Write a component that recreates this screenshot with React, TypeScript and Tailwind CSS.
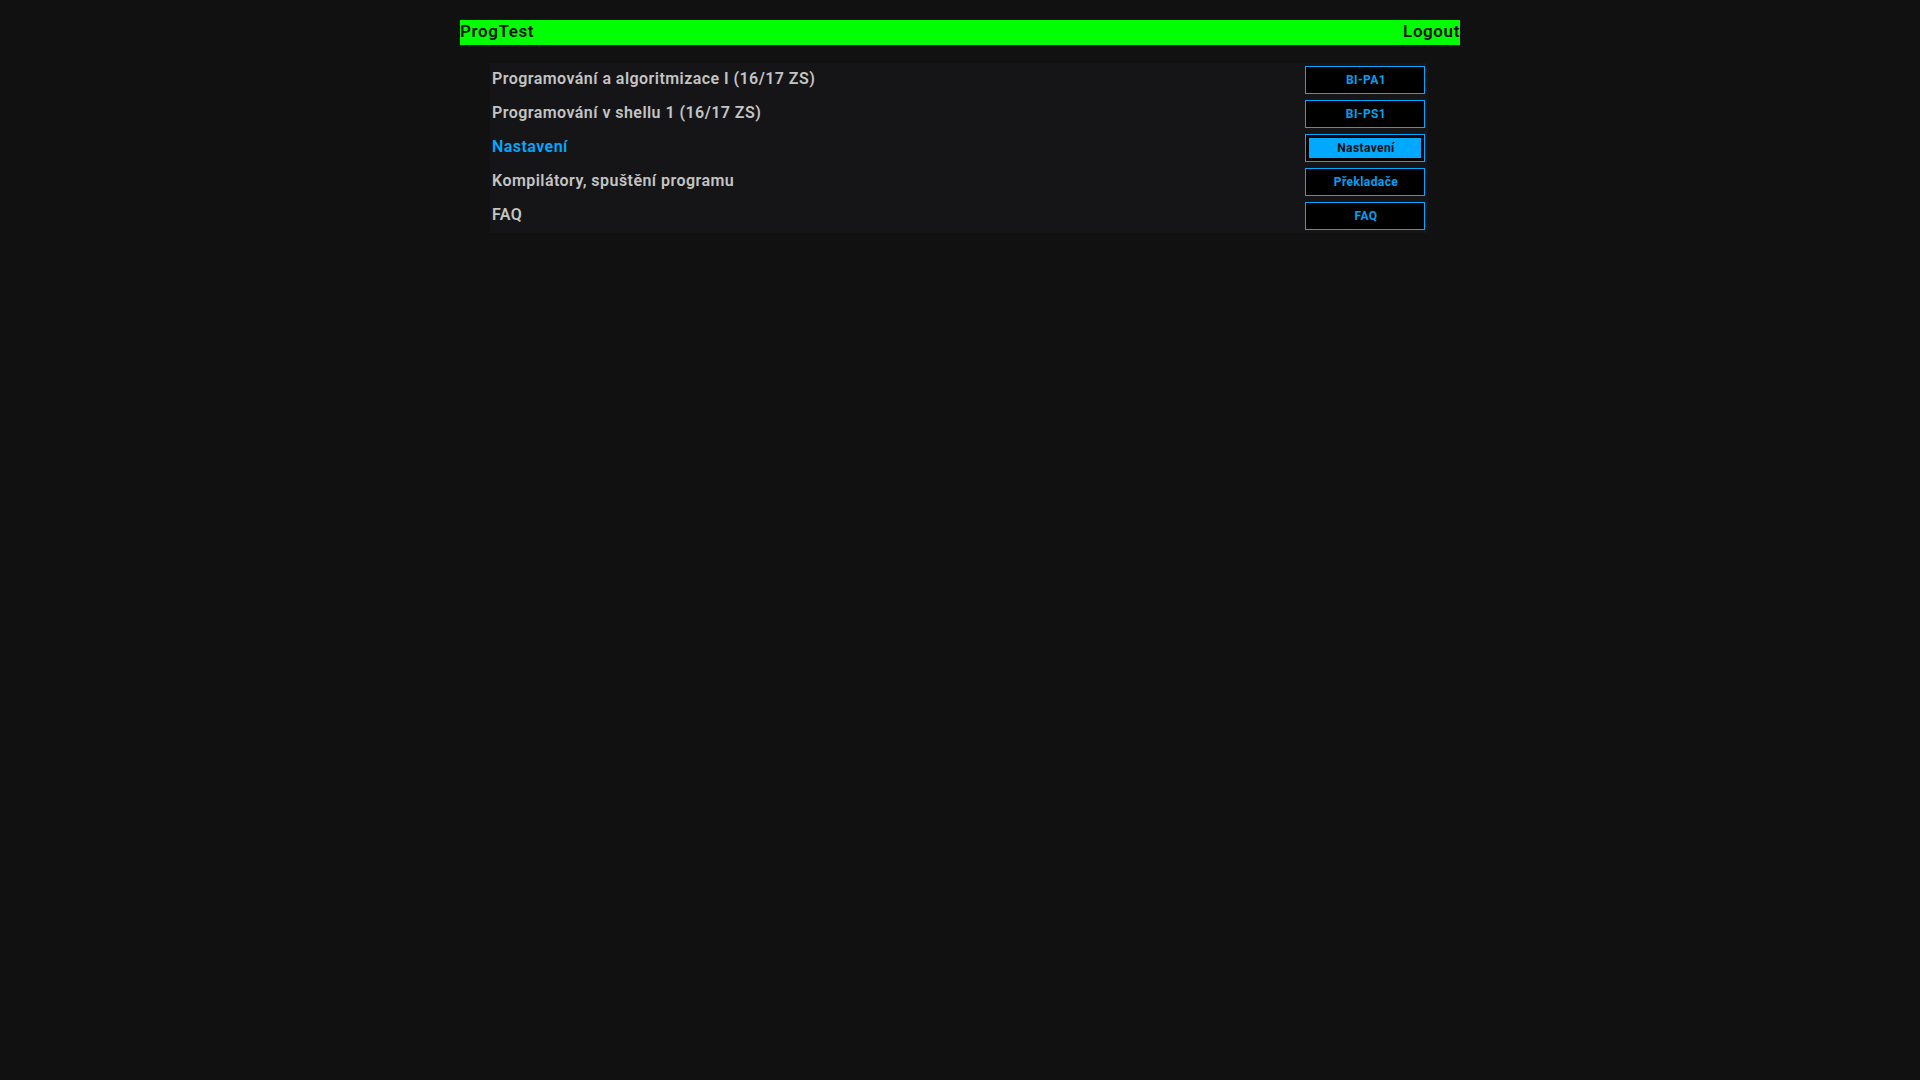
import React from "react";

const rows = [
  { title: "Programování a algoritmizace I (16/17 ZS)", btn: "BI-PA1" },
  { title: "Programování v shellu 1 (16/17 ZS)", btn: "BI-PS1" },
  { title: "Nastavení", btn: "Nastavení", active: true },
  { title: "Kompilátory, spuštění programu", btn: "Překladače" },
  { title: "FAQ", btn: "FAQ" },
];

export default function App() {
  return (
    <div className="min-h-screen bg-[#111111] pt-5 font-['Roboto',sans-serif]">
      <div className="mx-auto w-[1000px]">
        <div className="flex h-[25px] items-center justify-between bg-[#00ff00] pb-[1px] text-[17px] font-semibold tracking-[0.6px] text-[#111111]">
          <span>ProgTest</span>
          <span>Logout</span>
        </div>
        <div className="ml-[30px] mt-[18px] w-[938px] bg-[#151517]">
          {rows.map((row) => (
            <div key={row.btn} className="flex h-[34px] items-center justify-between pl-[2px] pr-[3px]">
              <span
                className={`pb-[2px] text-[16px] font-semibold tracking-[0.45px] ${
                  row.active ? "text-[#00a8ff]" : "text-[#c4c4c4]"
                }`}
              >
                {row.title}
              </span>
              <div className="flex h-[28px] w-[120px] border border-[#00a8ff] bg-black p-[3px]">
                <div
                  className={`flex flex-1 items-center justify-center pl-[2px] text-[12px] font-bold tracking-[0.4px] ${
                    row.active ? "bg-[#00a8ff] text-[#111111]" : "text-[#00a0f0]"
                  }`}
                >
                  {row.btn}
                </div>
              </div>
            </div>
          ))}
        </div>
      </div>
    </div>
  );
}
